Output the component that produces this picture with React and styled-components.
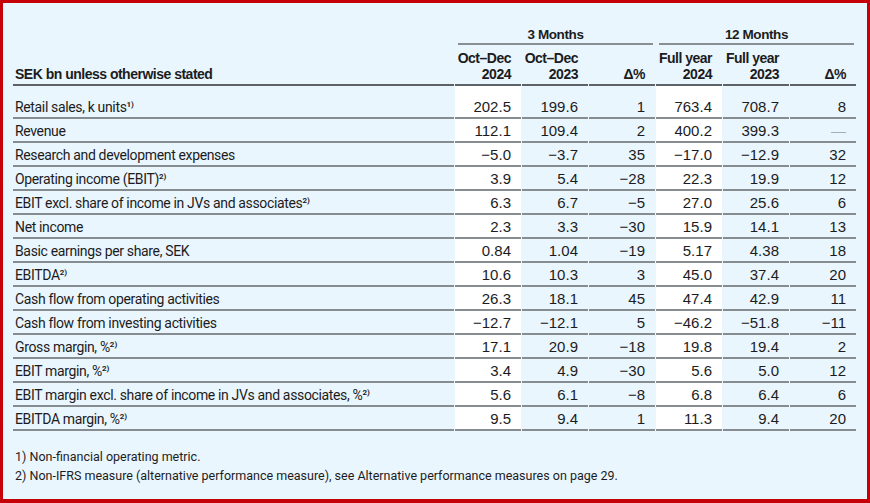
import React from 'react'
import styled, { createGlobalStyle } from 'styled-components'

const GlobalStyle = createGlobalStyle`
  html, body {
    margin: 0;
    padding: 0;
    background: #eaf6fd;
  }
`

const Frame = styled.div`
  box-sizing: border-box;
  width: 870px;
  height: 503px;
  border: 3px solid #c50008;
  border-bottom-width: 4px;
  background: #eaf6fd;
  padding: 24px 10px 0 9px;
  color: #1c1c1e;
`

const Table = styled.table`
  border-collapse: separate;
  border-spacing: 1px 0;
  table-layout: fixed;
  width: 845px;
`

const GroupHead = styled.th`
  padding: 0;
  font-family: 'Liberation Sans', Arial, sans-serif;
  font-weight: 700;
  font-size: 13.5px;
  letter-spacing: -0.4px;
  line-height: 16px;
  text-align: center;
`

const GroupLine = styled.div`
  margin: 0 2px 0 3px;
  border-bottom: 2px solid #8a8f94;
`

const ColHead = styled.th`
  padding: 5px 10px 2px 0;
  font-family: 'Liberation Sans', Arial, sans-serif;
  font-weight: 700;
  font-size: 14px;
  letter-spacing: -0.5px;
  line-height: 16px;
  text-align: ${(p) => (p.$left ? 'left' : 'right')};
  padding-left: ${(p) => (p.$left ? '2px' : '0')};
  vertical-align: bottom;
  white-space: nowrap;
  border-bottom: 2px solid #5d6266;
`

const Cell = styled.td`
  padding: ${(p) => (p.$first ? '11px' : '2px')} 10px 0 0;
  height: 20px;
  line-height: 20px;
  font-family: 'Liberation Sans', Arial, sans-serif;
  font-size: 15px;
  text-align: right;
  white-space: nowrap;
  background: ${(p) => (p.$white ? '#ffffff' : 'transparent')};
  color: ${(p) => (p.$muted ? '#a9adb1' : 'inherit')};
  border-bottom: 2px solid #878c91;
`

const Label = styled(Cell)`
  padding-left: 2px;
  padding-right: 0;
  text-align: left;
  font-family: Roboto, 'Liberation Sans', sans-serif;
  font-size: 14px;
  letter-spacing: -0.35px;
`

const Sup = styled.sup`
  font-size: 8px;
  font-weight: 700;
  letter-spacing: 0;
  line-height: 0;
  vertical-align: 5px;
`

const Notes = styled.div`
  margin-top: 16px;
  padding-left: 3px;
  font-family: Roboto, 'Liberation Sans', sans-serif;
  font-size: 12.5px;
  line-height: 19px;
`

const rows = [
  ['Retail sales, k units', '1)', '202.5', '199.6', '1', '763.4', '708.7', '8'],
  ['Revenue', null, '112.1', '109.4', '2', '400.2', '399.3', '—'],
  ['Research and development expenses', null, '−5.0', '−3.7', '35', '−17.0', '−12.9', '32'],
  ['Operating income (EBIT)', '2)', '3.9', '5.4', '−28', '22.3', '19.9', '12'],
  ['EBIT excl. share of income in JVs and associates', '2)', '6.3', '6.7', '−5', '27.0', '25.6', '6'],
  ['Net income', null, '2.3', '3.3', '−30', '15.9', '14.1', '13'],
  ['Basic earnings per share, SEK', null, '0.84', '1.04', '−19', '5.17', '4.38', '18'],
  ['EBITDA', '2)', '10.6', '10.3', '3', '45.0', '37.4', '20'],
  ['Cash flow from operating activities', null, '26.3', '18.1', '45', '47.4', '42.9', '11'],
  ['Cash flow from investing activities', null, '−12.7', '−12.1', '5', '−46.2', '−51.8', '−11'],
  ['Gross margin, %', '2)', '17.1', '20.9', '−18', '19.8', '19.4', '2'],
  ['EBIT margin, %', '2)', '3.4', '4.9', '−30', '5.6', '5.0', '12'],
  ['EBIT margin excl. share of income in JVs and associates, %', '2)', '5.6', '6.1', '−8', '6.8', '6.4', '6'],
  ['EBITDA margin, %', '2)', '9.5', '9.4', '1', '11.3', '9.4', '20'],
]

// columns 0 and 3 of the figures have a white background
const whiteCols = [0, 3]

const App = () => (
  <>
    <GlobalStyle />
    <Frame>
      <Table>
        <colgroup>
          <col />
          <col style={{ width: 66 }} />
          <col style={{ width: 66 }} />
          <col style={{ width: 66 }} />
          <col style={{ width: 66 }} />
          <col style={{ width: 66 }} />
          <col style={{ width: 66 }} />
        </colgroup>
        <thead>
          <tr>
            <GroupHead />
            <GroupHead colSpan={3}>
              <GroupLine>3 Months</GroupLine>
            </GroupHead>
            <GroupHead colSpan={3}>
              <GroupLine>12 Months</GroupLine>
            </GroupHead>
          </tr>
          <tr>
            <ColHead $left>SEK bn unless otherwise stated</ColHead>
            <ColHead>
              Oct–Dec
              <br />
              2024
            </ColHead>
            <ColHead>
              Oct–Dec
              <br />
              2023
            </ColHead>
            <ColHead>Δ%</ColHead>
            <ColHead>
              Full year
              <br />
              2024
            </ColHead>
            <ColHead>
              Full year
              <br />
              2023
            </ColHead>
            <ColHead>Δ%</ColHead>
          </tr>
        </thead>
        <tbody>
          {rows.map(([label, note, ...values], i) => (
            <tr key={label}>
              <Label $first={i === 0}>
                {label}
                {note && <Sup>{note}</Sup>}
              </Label>
              {values.map((v, j) => (
                <Cell
                  key={j}
                  $first={i === 0}
                  $white={whiteCols.includes(j)}
                  $muted={v === '—'}
                >
                  {v}
                </Cell>
              ))}
            </tr>
          ))}
        </tbody>
      </Table>
      <Notes>
        <div>1) Non-financial operating metric.</div>
        <div>
          2) Non-IFRS measure (alternative performance measure), see Alternative
          performance measures on page 29.
        </div>
      </Notes>
    </Frame>
  </>
)

export default App
